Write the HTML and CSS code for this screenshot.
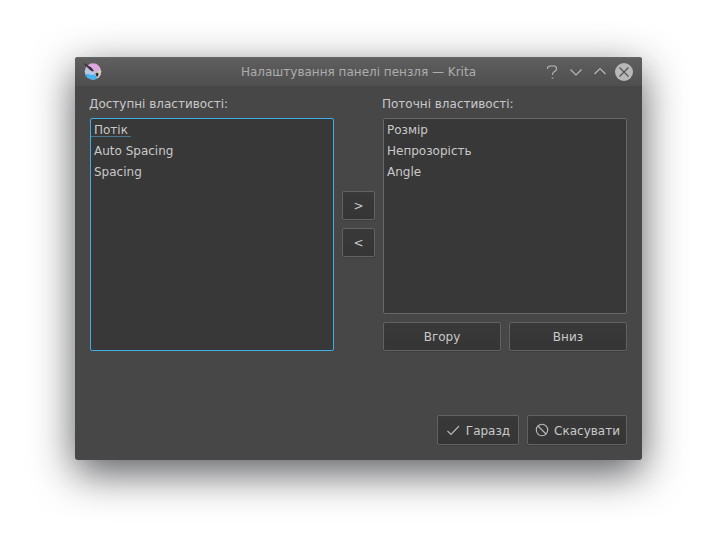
FILE: index.html
```html
<!DOCTYPE html>
<html lang="uk">
<head>
<meta charset="utf-8">
<title>Налаштування панелі пензля — Krita</title>
<link rel="stylesheet" href="styles.css">
</head>
<body>
<main class="window">
  <header class="titlebar">
    <svg class="logo" width="18" height="18" viewBox="0 0 18 18">
      <defs><clipPath id="disc"><circle cx="9" cy="8.500" r="8.200"/></clipPath></defs>
      <g clip-path="url(#disc)">
        <path fill="#dda7df" d="M0 0h18v18H0z"/>
        <path fill="#d3cbb9" d="M18 6l-6 3 1 9h5z"/>
        <path fill="#b9c6e4" d="M0 5l9 2 4 6-5 1-8-4z"/>
        <path fill="#42b4f0" d="M0 11h5c2 2 4 0 6 1l2 2v4H0z"/>
      </g>
      <path d="M.4.800l7 4.200L9.500 8.300 6.500 7z" fill="#333" stroke="#333" stroke-width="1"/>
      <path d="M9.500 8.300l2.500 2" stroke="#c9cbe0" stroke-width="1.200"/>
      <path d="M11.500 10l2.500-.3.500 1.800-.8 2.200-1.700-1z" fill="#333"/>
    </svg>
    <h1 class="title">Налаштування панелі пензля — Krita</h1>
    <div class="controls">
      <svg width="18" height="18" viewBox="0 0 18 18"><path d="M4.500 6V5Q5 3 7 3h4q2.500.2 2.500 2.500Q13.500 7.500 11.500 8.500 9.500 9.200 9.500 12"/><path d="M8.700 15h1.600"/></svg>
      <svg width="18" height="18" viewBox="0 0 18 18"><path d="M3.500 6.500L9 12l5.500-5.500"/></svg>
      <svg width="18" height="18" viewBox="0 0 18 18"><path d="M3.500 11L9 5.500l5.500 5.500"/></svg>
      <svg width="18" height="18" viewBox="0 0 18 18"><circle class="close-disc" cx="9" cy="9" r="9"/><path class="close-cross" d="M4.500 4.500l9 9m0-9l-9 9"/></svg>
    </div>
  </header>
  <div class="columns">
    <section class="column">
      <h2 class="label">Доступні властивості:</h2>
      <ul class="list focused">
        <li><span class="current">Потік</span></li>
        <li>Auto Spacing</li>
        <li>Spacing</li>
      </ul>
    </section>
    <div class="transfer">
      <button class="button">&gt;</button>
      <button class="button">&lt;</button>
    </div>
    <section class="column">
      <h2 class="label">Поточні властивості:</h2>
      <ul class="list">
        <li>Розмір</li>
        <li>Непрозорість</li>
        <li>Angle</li>
      </ul>
      <div class="order">
        <button class="button">Вгору</button>
        <button class="button">Вниз</button>
      </div>
    </section>
  </div>
  <footer class="actions">
    <button class="button ok"><svg width="16" height="16" viewBox="0 0 16 16"><path d="M1.500 8l3.500 3.500L13 3"/></svg>Гаразд</button>
    <button class="button cancel"><svg width="16" height="16" viewBox="0 0 16 16"><circle cx="8" cy="7" r="5.700"/><path d="M4 3l8 8"/></svg>Скасувати</button>
  </footer>
</main>
</body>
</html>
```
FILE: styles.css
```css
* {
  box-sizing: border-box;
}

body {
  margin: 0;
  height: 553px;
  padding: 57px 75px;
  overflow: hidden;
  background: #fff;
  color: #c9c9c9;
  font: 12px/15px "DejaVu Sans", sans-serif;
}

.window {
  display: flex;
  flex-direction: column;
  width: 567px;
  height: 403px;
  border-radius: 3px;
  background: #474747;
  box-shadow: 0 13px 42px rgba(25, 26, 30, 0.72);
}

.titlebar {
  display: grid;
  grid-template-columns: 90px 1fr 90px;
  align-items: center;
  height: 29px;
  padding: 0 9px;
  border-top: 1px solid #666;
  border-radius: 3px 3px 0 0;
  background: linear-gradient(#5f5f5f, #4e4e4e);
}

.title {
  margin: 1px 0 0;
  color: #adadad;
  font-size: 12px;
  font-weight: 400;
  text-align: center;
}

.controls {
  display: flex;
  gap: 6px;
  margin-top: -1px;
}

svg {
  display: block;
  flex: none;
  fill: none;
  stroke: #bababa;
  stroke-width: 1.1;
}

.logo {
  stroke: none;
}

.close-disc {
  fill: #b8b8b8;
  stroke: none;
}

.close-cross {
  stroke: #505050;
}

.columns {
  display: flex;
  gap: 8px;
  height: 265px;
  margin: 0 15px;
}

.column {
  display: flex;
  flex-direction: column;
  width: 244px;
}

.label {
  height: 32px;
  margin: 0 0 0 -1px;
  padding-top: 11px;
  font-size: 12px;
  font-weight: 400;
}

.list {
  flex: 1;
  margin: 0;
  padding: 0;
  border: 1px solid #686868;
  border-radius: 2px;
  background: #383838;
  list-style: none;
}

.list li {
  height: 21px;
  padding: 4px 3px 2px;
}

.focused {
  border-color: #3daee9;
}

.current {
  display: inline-block;
  height: 14px;
  margin-left: -3px;
  padding: 0 3px;
  border-bottom: 1px solid #4d7891;
}

.transfer {
  display: flex;
  flex-direction: column;
  justify-content: center;
  gap: 8px;
  width: 33px;
  margin-top: 11px;
}

.button {
  display: flex;
  align-items: center;
  justify-content: center;
  height: 29px;
  padding: 2px 0 0;
  border: 1px solid #626262;
  border-radius: 2px;
  background: linear-gradient(#393939, #353535);
  box-shadow: 0 1px 1px rgba(0, 0, 0, 0.12);
  color: inherit;
  font: inherit;
}

.order {
  display: grid;
  grid-template-columns: 1fr 1fr;
  gap: 8px;
  margin-top: 8px;
}

.actions {
  display: flex;
  justify-content: flex-end;
  gap: 8px;
  margin: auto 15px 15px;
}

.actions .button {
  height: 30px;
  gap: 4px;
}

.ok {
  width: 82px;
}

.cancel {
  width: 100px;
}
```
